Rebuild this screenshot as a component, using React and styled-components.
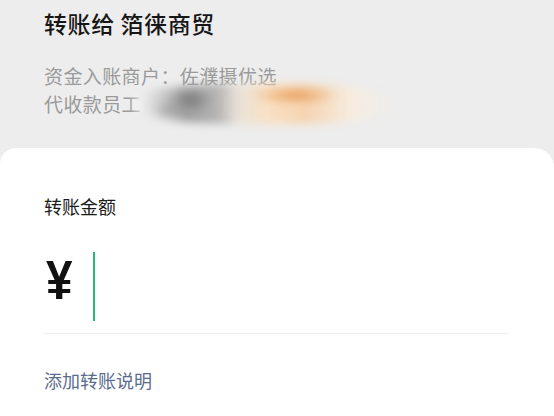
import React from "react";
import styled, { createGlobalStyle } from "styled-components";

const Global = createGlobalStyle`
  html, body { margin: 0; padding: 0; background: #ededed; }
  body { font-family: "Noto Sans CJK SC", "Noto Sans", sans-serif; }
  * { box-sizing: border-box; }
`;

const Page = styled.div`
  width: 554px;
  height: 416px;
  background: #ededed;
  display: flex;
  flex-direction: column;
  overflow: hidden;
`;

const Header = styled.div`
  padding: 6px 44px 0 44px;
  height: 148px;
`;

const Title = styled.div`
  font-size: 23px;
  font-weight: 500;
  color: #161616;
  line-height: 34px;
  letter-spacing: 0.6px;
`;

const InfoBlock = styled.div`
  margin-top: 22px;
  display: flex;
  flex-direction: column;
`;

const InfoLine = styled.div`
  position: relative;
  font-size: 19px;
  color: #9a9a9a;
  line-height: 28px;
  letter-spacing: 0.4px;
  white-space: nowrap;
`;

const Redact = styled.span`
  position: absolute;
  left: 90px;
  top: -6px;
  width: 260px;
  height: 40px;
  filter: blur(4px);
  border-radius: 40%;
  background:
    radial-gradient(ellipse 22px 10px at 22% 40%, rgba(110,110,110,0.85), transparent),
    radial-gradient(ellipse 18px 8px at 14% 62%, rgba(150,150,150,0.8), transparent),
    radial-gradient(ellipse 45px 9px at 62% 28%, rgba(228,140,60,0.8), transparent),
    linear-gradient(90deg,
      rgba(250,250,250,0.95) 0%,
      rgba(205,205,205,0.95) 10%,
      rgba(150,150,150,0.92) 20%,
      rgba(175,175,175,0.92) 32%,
      rgba(232,225,215,0.92) 40%,
      rgba(250,222,190,0.9) 52%,
      rgba(246,208,168,0.88) 66%,
      rgba(250,236,218,0.7) 84%,
      rgba(237,237,237,0) 100%);
`;

const Card = styled.div`
  flex: 1;
  background: #ffffff;
  border-radius: 16px 20px 0 0;
  padding: 45px 46px 0 44px;
  display: flex;
  flex-direction: column;
`;

const Label = styled.div`
  font-size: 18px;
  color: #1a1a1a;
  line-height: 26px;
`;

const AmountRow = styled.div`
  margin-top: 33px;
  display: flex;
  align-items: flex-start;
  border-bottom: 1px solid #ececec;
  padding-bottom: 12px;
`;

const Yen = styled.span`
  font-family: "Liberation Sans", Arial, sans-serif;
  font-weight: 700;
  font-size: 56px;
  color: #111;
  line-height: 1;
  transform: scaleX(0.85);
  transform-origin: left center;
  margin-left: 2px;
  width: 29px;
`;

const Caret = styled.span`
  display: block;
  width: 2px;
  height: 69px;
  background: #2bb673;
  margin-left: 18px;
`;

const Link = styled.div`
  margin-top: 33px;
  font-size: 18px;
  color: #5a6b8c;
  line-height: 26px;
`;

export default function App() {
  return (
    <Page>
      <Global />
      <Header>
        <Title>转账给 箔徕商贸</Title>
        <InfoBlock>
          <InfoLine>资金入账商户：佐濮摄优选</InfoLine>
          <InfoLine>
            代收款员工
            <Redact />
          </InfoLine>
        </InfoBlock>
      </Header>
      <Card>
        <Label>转账金额</Label>
        <AmountRow>
          <Yen>¥</Yen>
          <Caret />
        </AmountRow>
        <Link>添加转账说明</Link>
      </Card>
    </Page>
  );
}
